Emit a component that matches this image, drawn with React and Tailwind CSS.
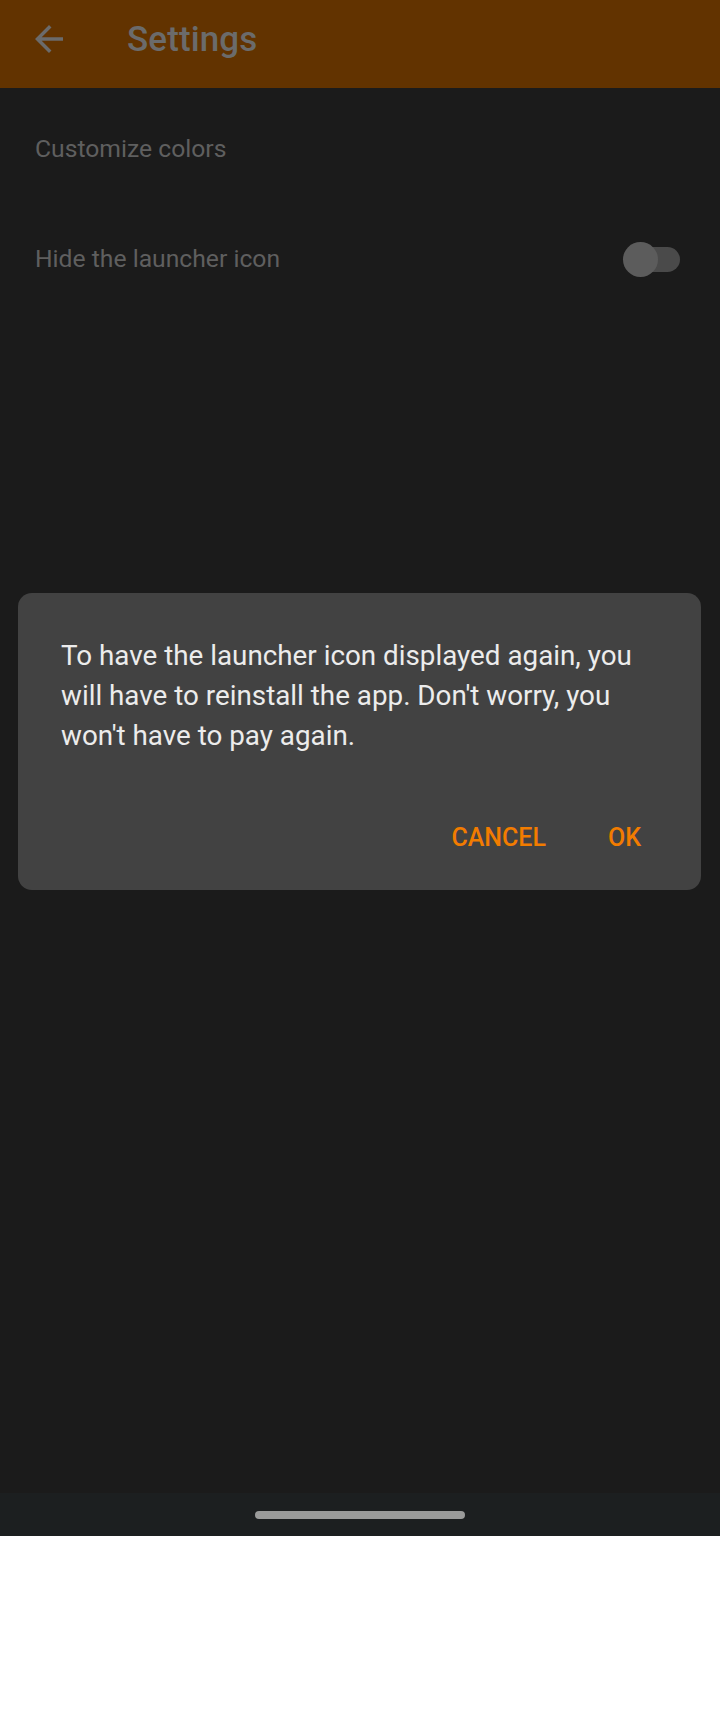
import React from "react";

const font = { fontFamily: "Roboto, 'Noto Sans', sans-serif" };

export default function App() {
  return (
    <div className="relative w-[720px] h-[1712px] flex flex-col bg-white" style={font}>
      <header className="h-[88px] shrink-0 bg-[#623300] flex items-start">
        <svg className="ml-[28px] mt-[18px] w-[42px] h-[42px]" viewBox="0 0 24 24" fill="#6b6b6b">
          <path d="M20 11H7.83l5.59-5.59L12 4l-8 8 8 8 1.41-1.41L7.83 13H20v-2z" />
        </svg>
        <h1 className="ml-[57px] mt-[20px] text-[35px] leading-[40px] font-medium text-[#6b6b6b] tracking-[0.1px]">Settings</h1>
      </header>
      <main className="h-[1405px] shrink-0 bg-[#1b1b1b] flex flex-col">
        <div className="h-[122px] flex items-center pl-[35px]">
          <span className="text-[24.7px] leading-[30px] text-[#5f5f5f]">Customize colors</span>
        </div>
        <div className="h-[98px] flex items-center justify-between pl-[35px] pr-[40px]">
          <span className="text-[24.7px] leading-[30px] text-[#5f5f5f]">Hide the launcher icon</span>
          <div className="relative w-[57px] h-[35px] flex items-center">
            <div className="absolute left-[5px] right-0 h-[25px] rounded-full bg-[#4a4a4a]" />
            <div className="absolute left-0 w-[35px] h-[35px] rounded-full bg-[#5c5c5c]" />
          </div>
        </div>
      </main>
      <nav className="h-[43px] shrink-0 bg-[#1c1f20] flex items-center justify-center">
        <div className="w-[210px] h-[8px] rounded-full bg-[#9a9b9a]" />
      </nav>
      <div className="flex-1 bg-white" />

      <div className="absolute left-[18px] top-[593px] w-[683px] h-[297px] rounded-[14px] bg-[#424242] flex flex-col">
        <p className="pt-[43px] pl-[43px] pr-[30px] text-[27.8px] leading-[40px] text-[#ececec]">
          To have the launcher icon displayed again, you<br />
          will have to reinstall the app. Don't worry, you<br />
          won't have to pay again.
        </p>
        <div className="mt-[67px] flex justify-end gap-[62px] pr-[60px]">
          <button className="text-[25px] leading-[29px] font-medium text-[#f27c00]">CANCEL</button>
          <button className="text-[25px] leading-[29px] font-medium text-[#f27c00]">OK</button>
        </div>
      </div>
    </div>
  );
}
